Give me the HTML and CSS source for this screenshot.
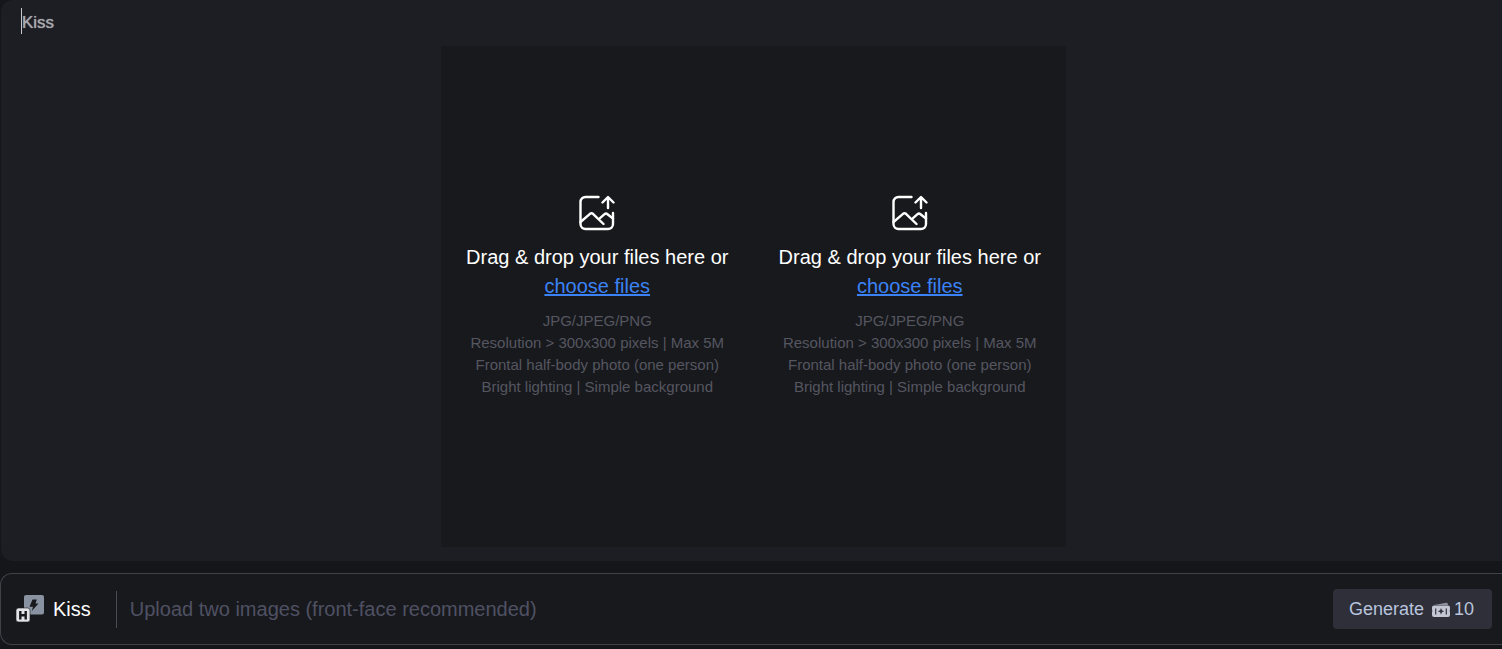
FILE: index.html
```
<!DOCTYPE html>
<html lang="en">

<head>
    <meta charset="UTF-8">
    <meta name="viewport" content="width=device-width, initial-scale=1.0">
    <title>Kiss</title>
    <link rel="stylesheet" href="styles.css">
</head>

<body>
    <main class="stage">
        <h1 class="stage-title">Kiss</h1>
        <div class="upload-box">
            <section class="dropzone">
                <svg class="upload-icon" viewBox="0 0 36 36" aria-hidden="true">
                    <path d="M19.5 2H6.5A5 5 0 0 0 1.500 7V29A5 5 0 0 0 6.500 34H29A5 5 0 0 0 34 29V18" />
                    <path d="M1.500 27L11 18.800Q12.500 17.600 14 18.800L24.500 29" />
                    <path d="M21 23.200L25.500 19.200Q27 18 28.500 19.200L34 23.500" />
                    <path d="M29 13V2.500M23.500 7.500L29 2L34.500 7.500" />
                </svg>
                <p class="drop-text">Drag &amp; drop your files here or</p>
                <a class="choose-link" href="#">choose files</a>
                <p class="drop-hint">JPG/JPEG/PNG<br>Resolution &gt; 300x300 pixels | Max 5M<br>Frontal half-body photo (one person)<br>Bright lighting | Simple background</p>
            </section>
            <section class="dropzone">
                <svg class="upload-icon" viewBox="0 0 36 36" aria-hidden="true">
                    <path d="M19.5 2H6.5A5 5 0 0 0 1.500 7V29A5 5 0 0 0 6.500 34H29A5 5 0 0 0 34 29V18" />
                    <path d="M1.500 27L11 18.800Q12.500 17.600 14 18.800L24.500 29" />
                    <path d="M21 23.200L25.500 19.200Q27 18 28.500 19.200L34 23.500" />
                    <path d="M29 13V2.500M23.500 7.500L29 2L34.500 7.500" />
                </svg>
                <p class="drop-text">Drag &amp; drop your files here or</p>
                <a class="choose-link" href="#">choose files</a>
                <p class="drop-hint">JPG/JPEG/PNG<br>Resolution &gt; 300x300 pixels | Max 5M<br>Frontal half-body photo (one person)<br>Bright lighting | Simple background</p>
            </section>
        </div>
    </main>
    <form class="prompt-bar">
        <svg class="mode-icon" viewBox="0 0 28 28" aria-hidden="true">
            <rect x="8" y="0" width="20" height="19.500" rx="2" fill="#8992a0" />
            <path d="M16.500 4.500H20.800L19.500 8.500H22.500L15.800 16L17 11.800H13.500Z" fill="#18191d" />
            <rect x="0" y="13" width="14" height="14" rx="2.500" fill="#e2e3e7" stroke="#18191d" stroke-width=".6" />
            <path d="M4.300 16V24.500M9.700 16V24.500M4.300 20.200H9.700" stroke="#18191d" stroke-width="2.400" />
        </svg>
        <label class="mode-name" for="prompt">Kiss</label>
        <input class="prompt-input" id="prompt" type="text" placeholder="Upload two images (front-face recommended)">
        <button class="generate-btn" type="button">
            Generate
            <svg class="ticket-icon" viewBox="0 0 18 15" aria-hidden="true">
                <path d="M2 3L14.500 0.800Q15.800 0.600 16 3Z" fill="#9295a1" />
                <path d="M2 3.500H16Q18 3.500 18 5.500V7.500Q17.300 9 18 10.500V13Q18 15 16 15H2Q0 15 0 13V10.500Q0.700 9 0 7.500V5.500Q0 3.500 2 3.500Z" fill="#c3c6d3" />
                <path d="M3.700 6.500V12.500M14.300 6.500V12.500" stroke="#34353f" stroke-width="1.200" />
                <path d="M9 6L10 8.300L12.200 9.300L10 10.300L9 12.600L8 10.300L5.800 9.300L8 8.300Z" fill="#34353f" />
            </svg>
            <span>10</span>
        </button>
    </form>
</body>

</html>
```
FILE: styles.css
```
* {
    margin: 0;
    padding: 0;
    box-sizing: border-box;
}

body {
    display: flex;
    flex-direction: column;
    gap: 12px;
    min-height: 100vh;
    padding-bottom: 4px;
    background: #15161a;
    color: #fff;
    font-family: "Liberation Sans", Arial, sans-serif;
    font-size: 20px;
}

.stage {
    flex: 1;
    display: flex;
    flex-direction: column;
    gap: 12px;
    margin-left: 1px;
    padding: 8px 0 14px 4px;
    background: #1d1e23;
    border-radius: 12px 0 0 12px;
}

.stage-title {
    align-self: flex-start;
    height: 26px;
    margin-left: 16px;
    border-left: 1px solid #c8c8cc;
    color: #a9aaae;
    font-size: 17px;
    font-weight: normal;
    line-height: 30px;
    text-shadow: 0 0 1px #a9aaae;
}

.upload-box {
    flex: 1;
    align-self: center;
    display: grid;
    grid-template-columns: 1fr 1fr;
    width: 100%;
    max-width: 625px;
    background: #18191d;
}

.dropzone {
    display: flex;
    flex-direction: column;
    align-items: center;
    justify-content: center;
    text-align: center;
}

.upload-icon {
    width: 36px;
    height: 36px;
    margin-bottom: 12px;
    fill: none;
    stroke: #fff;
    stroke-width: 2.4;
    stroke-linecap: round;
    stroke-linejoin: round;
}

.drop-text,
.choose-link {
    line-height: 29px;
}

.choose-link {
    color: #3b82f6;
}

.drop-hint {
    margin-top: 9px;
    color: #555660;
    font-size: 15px;
    line-height: 22px;
}

.prompt-bar {
    display: flex;
    align-items: center;
    height: 72px;
    padding: 0 10px 0 15px;
    background: #18191d;
    border: 1px solid #414248;
    border-right: 0;
    border-radius: 12px 0 0 12px;
}

.mode-icon {
    width: 28px;
    height: 28px;
    margin-right: 9px;
}

.mode-name {
    padding-right: 25px;
    border-right: 1px solid #4a4b53;
    line-height: 37px;
}

.prompt-input {
    flex: 1;
    min-width: 0;
    height: 40px;
    margin: 0 13px;
    background: transparent;
    border: 0;
    outline: 0;
    color: #fff;
    font: inherit;
}

.prompt-input::placeholder {
    color: #4f5163;
}

.generate-btn {
    display: flex;
    align-items: center;
    justify-content: center;
    height: 40px;
    padding: 0 18px 0 16px;
    background: #2e2f38;
    border: 0;
    border-radius: 4px;
    color: #b9c4dd;
    font: inherit;
    font-size: 18px;
    cursor: pointer;
}

.ticket-icon {
    width: 18px;
    height: 15px;
    margin: 0 4px 0 8px;
}
```
